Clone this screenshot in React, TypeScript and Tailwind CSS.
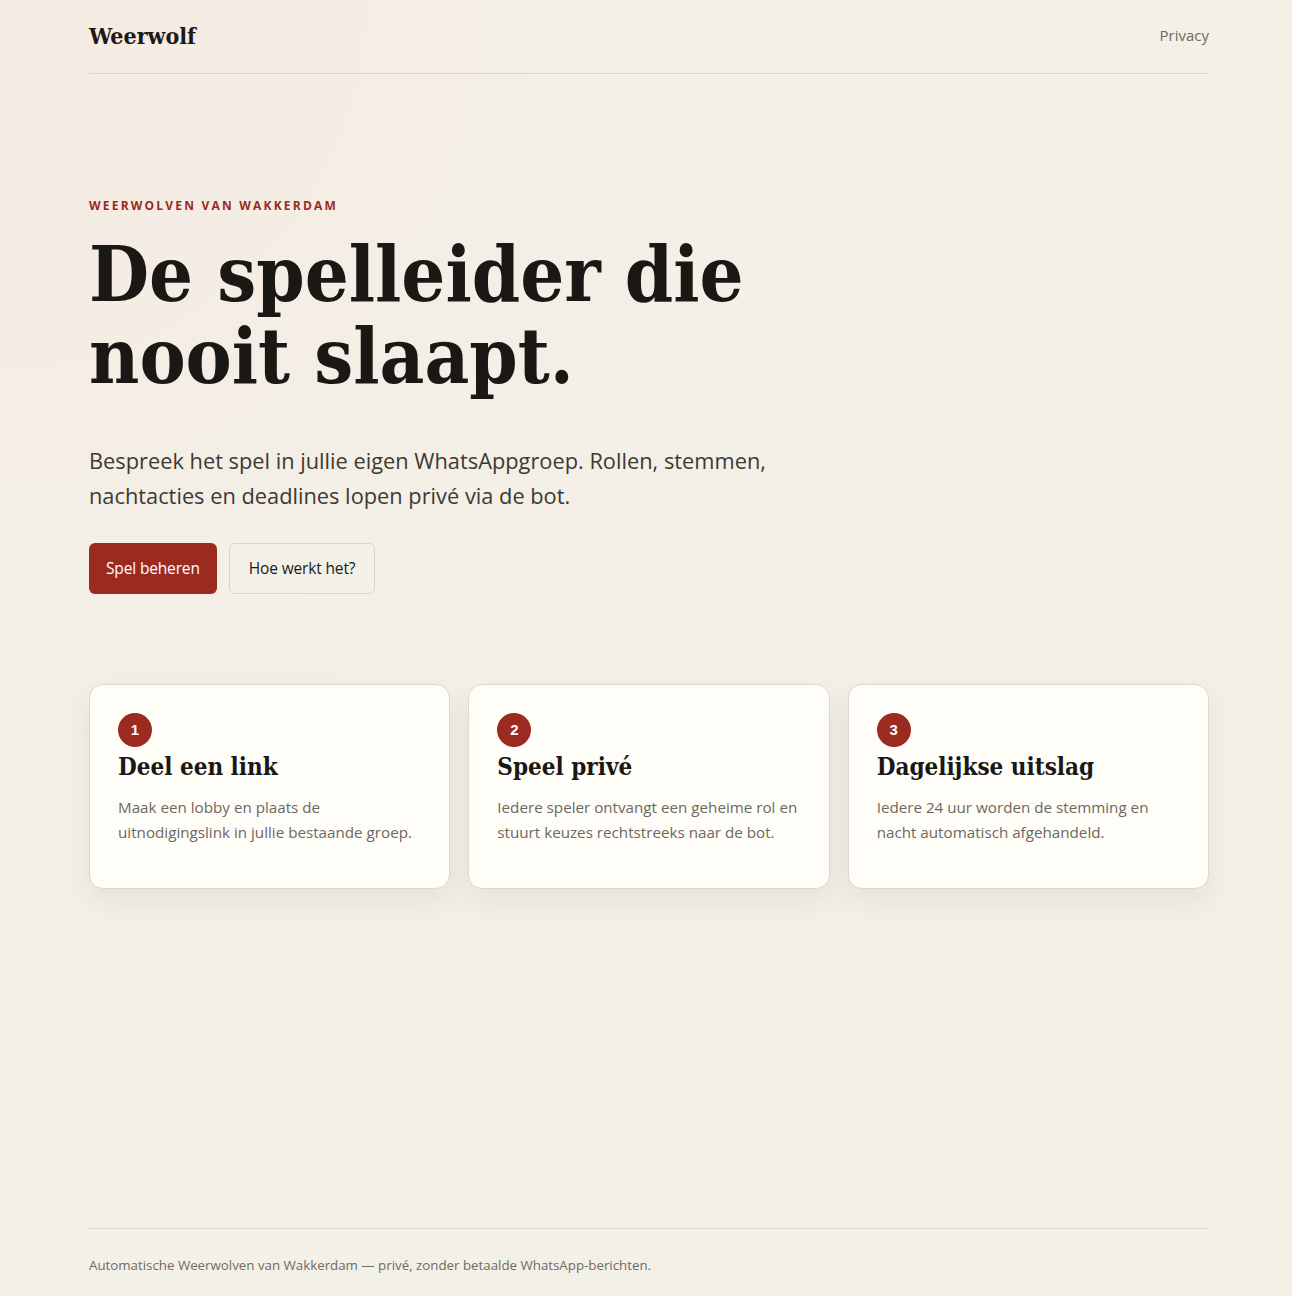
const steps = [
  {
    n: '1',
    title: 'Deel een link',
    text: 'Maak een lobby en plaats de uitnodigingslink in jullie bestaande groep.',
  },
  {
    n: '2',
    title: 'Speel privé',
    text: 'Iedere speler ontvangt een geheime rol en stuurt keuzes rechtstreeks naar de bot.',
  },
  {
    n: '3',
    title: 'Dagelijkse uitslag',
    text: 'Iedere 24 uur worden de stemming en nacht automatisch afgehandeld.',
  },
]

const serif = "font-['Georgia','DejaVu_Serif_Condensed','DejaVu_Serif',serif]"

export default function App() {
  return (
    <div className="min-h-[1296px] bg-[#f3f0e8] bg-[radial-gradient(ellipse_at_top_left,#f5ebe2_0%,#f3f0e8_45%)] font-['Open_Sans','Noto_Sans',sans-serif] text-[#1c1a17]">
      <div className="flex min-h-[1296px] flex-col pl-[89px] pr-[83px]">
        {/* header */}
        <header className="flex h-[74px] items-center justify-between border-b border-[#dcd7cc]">
          <span className={`${serif} text-[23px] font-bold text-[#1c1a17]`}>Weerwolf</span>
          <a className="-mt-[3px] text-[15px] text-[#6f6a62]">Privacy</a>
        </header>

        {/* hero */}
        <section className="pt-[123px]">
          <p className="text-[12px] font-bold tracking-[2.2px] text-[#9b2a21]">WEERWOLVEN VAN WAKKERDAM</p>
          <h1 className={`${serif} mt-[18px] text-[77px] font-bold leading-[82px] text-[#1a1814]`}>
            De spelleider die
            <br />
            nooit slaapt.
          </h1>
          <p className="mt-[46px] max-w-[690px] text-[21.8px] leading-[35px] text-[#3d3933]">
            Bespreek het spel in jullie eigen WhatsAppgroep. Rollen, stemmen, nachtacties en deadlines lopen privé via de bot.
          </p>
          <div className="mt-[30px] flex gap-3">
            <button className="h-[51px] rounded-[6px] bg-[#9b2a21] px-[17px] text-[15.5px] tracking-[-0.15px] text-white">Spel beheren</button>
            <button className="h-[51px] rounded-[6px] border border-[#d9d4c7] bg-[#f3f0e8] px-[19px] text-[15.5px] tracking-[-0.15px] text-[#1c1a17]">
              Hoe werkt het?
            </button>
          </div>
        </section>

        {/* steps */}
        <section className="mt-[90px] grid grid-cols-3 gap-[18px]">
          {steps.map((s) => (
            <div
              key={s.n}
              className="h-[205px] rounded-[14px] border border-[#ddd8cc] bg-[#fffdf8] px-[28px] pt-[28px] shadow-[0_12px_30px_rgba(60,45,25,0.08)]"
            >
              <div className="flex h-[34px] w-[34px] items-center justify-center rounded-full bg-[#9b2a21] font-['Liberation_Sans',sans-serif] text-[15px] font-bold text-white">
                {s.n}
              </div>
              <h3 className={`${serif} mt-[2px] text-[24px] font-bold leading-[36px] text-[#1a1814]`}>{s.title}</h3>
              <p className="mt-[10px] text-[15.2px] leading-[25px] text-[#6d6860]">{s.text}</p>
            </div>
          ))}
        </section>

        <div className="flex-1" />

        {/* footer */}
        <footer className="mb-[20px] border-t border-[#dcd7cc] pt-[27px]">
          <p className="text-[13.3px] text-[#6f6a62]">
            Automatische Weerwolven van Wakkerdam — privé, zonder betaalde WhatsApp-berichten.
          </p>
        </footer>
      </div>
    </div>
  )
}
